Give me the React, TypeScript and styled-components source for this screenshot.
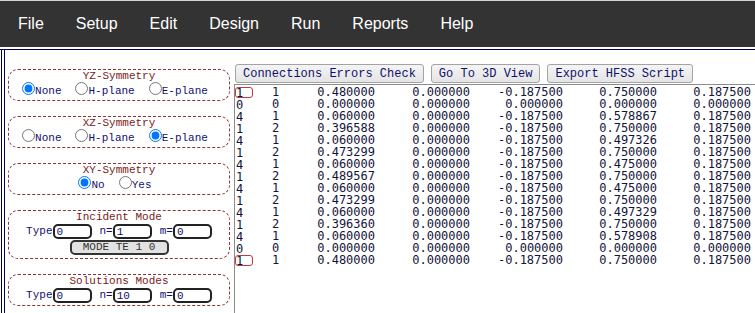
import styled, { createGlobalStyle } from "styled-components";

const GlobalStyle = createGlobalStyle`
  html, body {
    margin: 0;
    padding: 0;
    background: #ffffff;
  }
  body {
    font-family: "Liberation Mono", monospace;
  }
`;

const menuItems = ["File", "Setup", "Edit", "Design", "Run", "Reports", "Help"];

/* node table printed by the solver, one line per segment */
const rows: string[][] = [
  ["1", "1", "0.480000", "0.000000", "-0.187500", "0.750000", "0.187500"],
  ["0", "0", "0.000000", "0.000000", "0.000000", "0.000000", "0.000000"],
  ["4", "1", "0.060000", "0.000000", "-0.187500", "0.578867", "0.187500"],
  ["1", "2", "0.396588", "0.000000", "-0.187500", "0.750000", "0.187500"],
  ["4", "1", "0.060000", "0.000000", "-0.187500", "0.497326", "0.187500"],
  ["1", "2", "0.473299", "0.000000", "-0.187500", "0.750000", "0.187500"],
  ["4", "1", "0.060000", "0.000000", "-0.187500", "0.475000", "0.187500"],
  ["1", "2", "0.489567", "0.000000", "-0.187500", "0.750000", "0.187500"],
  ["4", "1", "0.060000", "0.000000", "-0.187500", "0.475000", "0.187500"],
  ["1", "2", "0.473299", "0.000000", "-0.187500", "0.750000", "0.187500"],
  ["4", "1", "0.060000", "0.000000", "-0.187500", "0.497329", "0.187500"],
  ["1", "2", "0.396360", "0.000000", "-0.187500", "0.750000", "0.187500"],
  ["4", "1", "0.060000", "0.000000", "-0.187500", "0.578908", "0.187500"],
  ["0", "0", "0.000000", "0.000000", "0.000000", "0.000000", "0.000000"],
  ["1", "1", "0.480000", "0.000000", "-0.187500", "0.750000", "0.187500"],
];

const highlighted = [0, 14];

const App = () => {
  return (
    <>
      <GlobalStyle />
      <MenuBar>
        {menuItems.map((item) => (
          <MenuItem key={item}>{item}</MenuItem>
        ))}
      </MenuBar>
      <Main>
        <SidePanel>
          <Group>
            <GroupTitle>YZ-Symmetry</GroupTitle>
            <RadioRow>
              <Option><Radio type="radio" name="yz" defaultChecked /><OptionLabel>None</OptionLabel></Option>
              <Option><Radio type="radio" name="yz" /><OptionLabel>H-plane</OptionLabel></Option>
              <Option><Radio type="radio" name="yz" /><OptionLabel>E-plane</OptionLabel></Option>
            </RadioRow>
          </Group>
          <Group>
            <GroupTitle>XZ-Symmetry</GroupTitle>
            <RadioRow>
              <Option><Radio type="radio" name="xz" /><OptionLabel>None</OptionLabel></Option>
              <Option><Radio type="radio" name="xz" /><OptionLabel>H-plane</OptionLabel></Option>
              <Option><Radio type="radio" name="xz" defaultChecked /><OptionLabel>E-plane</OptionLabel></Option>
            </RadioRow>
          </Group>
          <Group>
            <GroupTitle>XY-Symmetry</GroupTitle>
            <RadioRow>
              <Option><Radio type="radio" name="xy" defaultChecked /><OptionLabel>No</OptionLabel></Option>
              <Option><Radio type="radio" name="xy" /><OptionLabel>Yes</OptionLabel></Option>
            </RadioRow>
          </Group>
          <Group $pad={3}>
            <GroupTitle>Incident Mode</GroupTitle>
            <FieldRow>
              <Field>Type<NumInput defaultValue="0" /></Field>
              <Field>n=<NumInput defaultValue="1" /></Field>
              <Field>m=<NumInput defaultValue="0" /></Field>
            </FieldRow>
            <ModeButton>MODE TE 1 0</ModeButton>
          </Group>
          <Group>
            <GroupTitle>Solutions Modes</GroupTitle>
            <FieldRow>
              <Field>Type<NumInput defaultValue="0" /></Field>
              <Field>n=<NumInput defaultValue="10" /></Field>
              <Field>m=<NumInput defaultValue="0" /></Field>
            </FieldRow>
          </Group>
        </SidePanel>
        <Workspace>
          <Toolbar>
            <ToolButton>Connections Errors Check</ToolButton>
            <ToolButton>Go To 3D View</ToolButton>
            <ToolButton>Export HFSS Script</ToolButton>
          </Toolbar>
          <Output>
            {rows.map((row, i) =>
              row.map((value, j) =>
                j === 0 ? (
                  <Cell key={`${i}-${j}`}>
                    <Marker $on={highlighted.includes(i)}>{value}</Marker>
                  </Cell>
                ) : (
                  <Cell key={`${i}-${j}`} $right={j > 1}>
                    {value}
                  </Cell>
                )
              )
            )}
          </Output>
        </Workspace>
      </Main>
    </>
  );
};

export default App;

const MenuBar = styled.nav`
  display: flex;
  align-items: center;
  height: 46px;
  padding-left: 2px;
  border-top: 1px solid #d4d4d4;
  background: #333333;
`;

const MenuItem = styled.a`
  padding: 0 16px;
  color: #ffffff;
  font-family: "Liberation Sans", Arial, sans-serif;
  font-size: 16px;
  cursor: pointer;
  &:hover {
    opacity: 0.8;
  }
`;

const Main = styled.div`
  display: flex;
  margin-top: 2px;
  height: calc(100vh - 49px);
  border-top: 1px solid #00005a;
`;

const SidePanel = styled.div`
  box-sizing: border-box;
  width: 232px;
  margin-left: 1px;
  padding: 19px 3px 0;
  border-left: 4px double #00005a;
  display: flex;
  flex-direction: column;
  gap: 15px;
`;

const Group = styled.div<{ $pad?: number }>`
  box-sizing: border-box;
  display: flex;
  flex-direction: column;
  align-items: center;
  padding-bottom: ${(p) => p.$pad ?? 2}px;
  border: 1px dashed #8a3434;
  border-radius: 10px;
`;

const GroupTitle = styled.div`
  color: #7a1a1a;
  font-size: 11px;
  line-height: 12px;
`;

const RadioRow = styled.div`
  display: flex;
  gap: 14px;
  padding-right: 8px;
`;

const Option = styled.label`
  display: flex;
  align-items: flex-start;
`;

const Radio = styled.input`
  width: 13px;
  height: 13px;
  margin: 0;
`;

const OptionLabel = styled.span`
  padding-top: 2px;
  color: #101070;
  font-size: 11px;
  line-height: 14px;
`;

const FieldRow = styled.div`
  display: flex;
  gap: 8px;
  margin-top: 1px;
`;

const Field = styled.label`
  display: flex;
  align-items: center;
  color: #101070;
  font-size: 11px;
  line-height: 15px;
`;

const NumInput = styled.input`
  box-sizing: border-box;
  width: 39px;
  height: 15px;
  padding: 0 2px;
  border: 2px solid #222222;
  border-radius: 5px;
  color: #101070;
  font-family: "Liberation Mono", monospace;
  font-size: 11px;
  outline: none;
`;

const ModeButton = styled.button`
  box-sizing: border-box;
  width: 99px;
  height: 15px;
  margin-top: 1px;
  padding: 0;
  border: 2px solid #333333;
  border-radius: 5px;
  background: #e2e2e2;
  color: #333333;
  font-family: "Liberation Mono", monospace;
  font-size: 11px;
  line-height: 11px;
`;

const Workspace = styled.div`
  flex: 1;
  display: flex;
  flex-direction: column;
  padding-left: 1px;
  min-width: 0;
`;

const Toolbar = styled.div`
  display: flex;
  gap: 7px;
  margin-top: 14px;
  padding-left: 1px;
`;

const ToolButton = styled.button`
  box-sizing: border-box;
  height: 19px;
  padding: 0 7px;
  border: 1px solid #a3a3a3;
  border-radius: 3px;
  background: linear-gradient(#f4f4f4, #e4e4e4);
  color: #10106a;
  font-family: "Liberation Mono", monospace;
  font-size: 12px;
  white-space: nowrap;
`;

const Output = styled.div`
  flex: 1;
  display: grid;
  grid-template-columns: 37px 38px 65px 95px 93px 94px 94px;
  grid-auto-rows: 12px;
  align-content: start;
  margin-top: 1px;
  padding: 1px 0 0;
  border-top: 1px solid #8c8c8c;
  border-left: 1px solid #8c8c8c;
  color: #14143a;
  font-family: "DejaVu Sans Mono", monospace;
  font-size: 12px;
  line-height: 12px;
  white-space: pre;
`;

const Cell = styled.div<{ $right?: boolean }>`
  text-align: ${(p) => (p.$right ? "right" : "left")};
`;

const Marker = styled.span<{ $on: boolean }>`
  display: block;
  box-sizing: border-box;
  width: 18px;
  height: 11px;
  line-height: 10px;
  margin-top: 1px;
  border: 1px solid ${(p) => (p.$on ? "#c0393b" : "transparent")};
  border-radius: 3px;
`;
